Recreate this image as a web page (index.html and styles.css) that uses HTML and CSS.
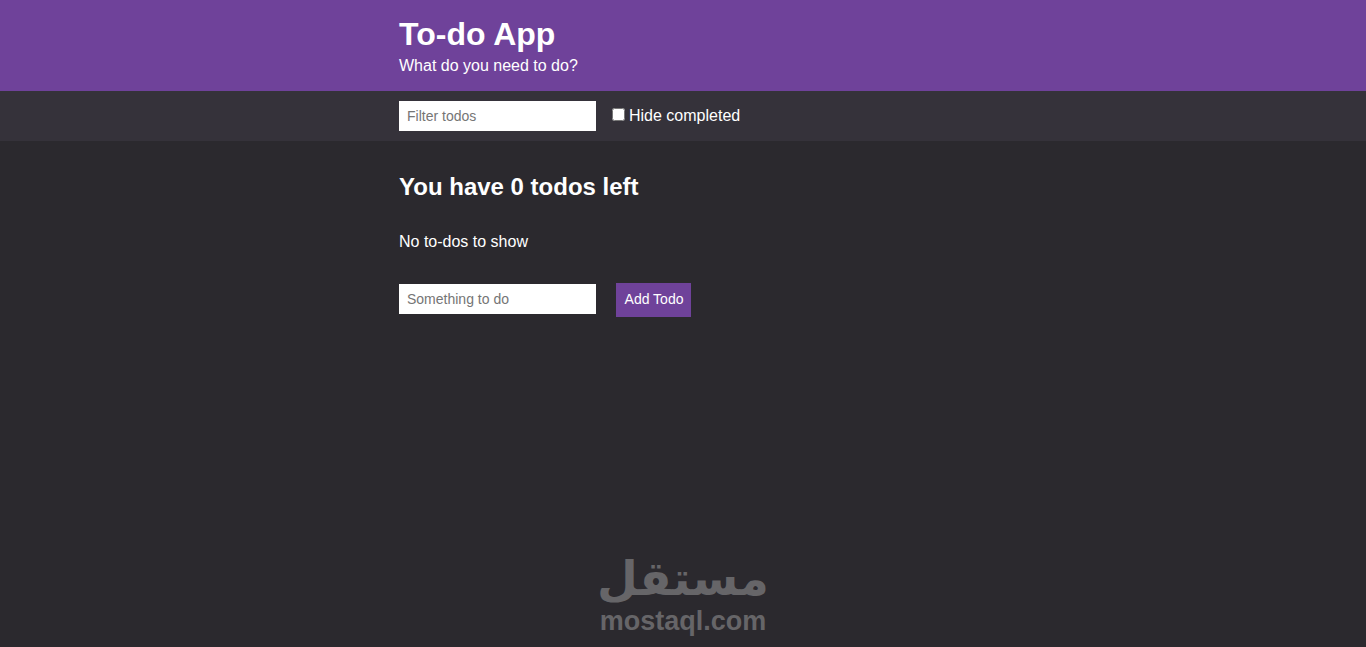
FILE: index.html
```html
<!DOCTYPE html>
<html lang="en">
<head>
    <meta charset="UTF-8">
    <meta name="viewport" content="width=device-width, initial-scale=1.0">
    <title>To-do App</title>
    <link rel="stylesheet" href="styles.css">
</head>
<body>
    <header class="header">
        <div class="container">
            <h1>To-do App</h1>
            <p class="subtitle">What do you need to do?</p>
        </div>
    </header>

    <div class="toolbar">
        <div class="container toolbar-row">
            <input type="text" class="text-input" placeholder="Filter todos">
            <label class="hide-label"><input type="checkbox" class="hide-check">Hide completed</label>
        </div>
    </div>

    <main class="container content">
        <h2>You have 0 todos left</h2>
        <p class="empty">No to-dos to show</p>
        <form class="add-form">
            <input type="text" class="text-input" placeholder="Something to do">
            <button type="button" class="add-btn">Add Todo</button>
        </form>
    </main>

    <div class="watermark">
        <span class="watermark-ar" lang="ar" dir="rtl">مستقل</span>
        <span class="watermark-en">mostaql.com</span>
    </div>
</body>
</html>
```

FILE: styles.css
```css
* {
    box-sizing: border-box;
}
html, body {
    height: 100%;
}
body {
    font-family: "Liberation Sans", Arial, sans-serif;
    margin: 0;
    padding: 0;
    background-color: #2b292e;
    color: #fff;
    overflow: hidden;
}
.container {
    width: 568px;
    margin: 0 auto;
}
.header {
    height: 91px;
    padding-top: 16px;
    background-color: #6f429a;
}
h1 {
    margin: 0;
    font-size: 32px;
    line-height: 36px;
}
.subtitle {
    margin: 4px 0 0;
    font-size: 16px;
    line-height: 20px;
}
.toolbar {
    height: 50px;
    padding-top: 10px;
    background-color: #35323a;
}
.toolbar-row {
    display: flex;
    align-items: flex-start;
}
.text-input {
    width: 197px;
    height: 30px;
    padding: 0 8px;
    border: none;
    border-radius: 0;
    background-color: #fff;
    font-family: inherit;
    font-size: 14px;
}
.text-input::placeholder {
    color: #757575;
}
.hide-label {
    display: flex;
    align-items: center;
    height: 30px;
    margin-left: 16px;
    font-size: 16px;
}
.hide-check {
    width: 13px;
    height: 13px;
    margin: 0 4px 4px 0;
}
.content {
    padding-top: 32px;
}
h2 {
    margin: 0;
    font-size: 24px;
    line-height: 28px;
}
.empty {
    margin: 31px 0 0;
    font-size: 16px;
    line-height: 20px;
}
.add-form {
    display: flex;
    align-items: flex-start;
    margin-top: 31px;
}
.add-form .text-input {
    margin-top: 1px;
}
.add-btn {
    width: 75px;
    height: 34px;
    margin-left: 20px;
    padding: 0 0 2px 1px;
    border: none;
    background-color: #6f429a;
    color: #fff;
    font-family: inherit;
    font-size: 14px;
    cursor: pointer;
}
.watermark {
    position: absolute;
    left: 600px;
    top: 549px;
    width: 166px;
    display: flex;
    flex-direction: column;
    align-items: center;
    color: #666568;
    font-weight: bold;
}
.watermark-ar {
    font-family: "DejaVu Sans", sans-serif;
    font-size: 47px;
    line-height: 60px;
}
.watermark-en {
    font-family: "Liberation Sans", Arial, sans-serif;
    font-size: 27px;
    line-height: 24px;
}
```
